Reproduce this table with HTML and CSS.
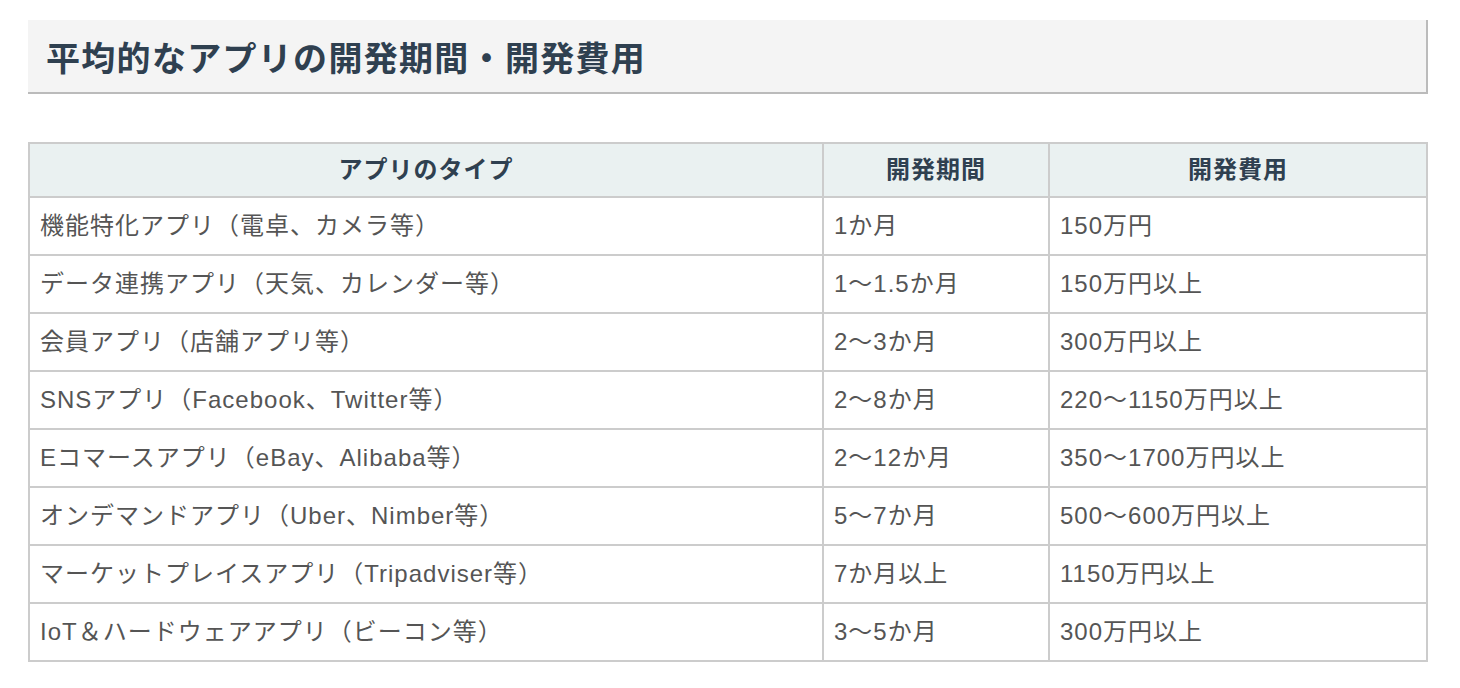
FILE: index.html
```html
<!DOCTYPE html>
<html lang="ja">
<head>
<meta charset="utf-8">
<link rel="stylesheet" href="styles.css">
</head>
<body>
<div class="page">
  <h2 class="heading">平均的なアプリの開発期間・開発費用</h2>
  <table class="cost-table">
    <colgroup>
      <col class="c-type">
      <col class="c-period">
      <col class="c-cost">
    </colgroup>
    <thead>
      <tr><th>アプリのタイプ</th><th>開発期間</th><th>開発費用</th></tr>
    </thead>
    <tbody>
      <tr><td>機能特化アプリ（電卓、カメラ等）</td><td>1か月</td><td>150万円</td></tr>
      <tr><td>データ連携アプリ（天気、カレンダー等）</td><td>1〜1.5か月</td><td>150万円以上</td></tr>
      <tr><td>会員アプリ（店舗アプリ等）</td><td>2〜3か月</td><td>300万円以上</td></tr>
      <tr><td>SNSアプリ（Facebook、Twitter等）</td><td>2〜8か月</td><td>220〜1150万円以上</td></tr>
      <tr><td>Eコマースアプリ（eBay、Alibaba等）</td><td>2〜12か月</td><td>350〜1700万円以上</td></tr>
      <tr><td>オンデマンドアプリ（Uber、Nimber等）</td><td>5〜7か月</td><td>500〜600万円以上</td></tr>
      <tr><td>マーケットプレイスアプリ（Tripadviser等）</td><td>7か月以上</td><td>1150万円以上</td></tr>
      <tr><td>IoT＆ハードウェアアプリ（ビーコン等）</td><td>3〜5か月</td><td>300万円以上</td></tr>
    </tbody>
  </table>
</div>
</body>
</html>
```
FILE: styles.css
```css
html, body {
  margin: 0;
  padding: 0;
  background: #ffffff;
}
body {
  font-family: "Liberation Sans", "Noto Sans CJK JP", sans-serif;
}
.page {
  padding: 20px 0 0 28px;
  width: 1400px;
}
.heading {
  margin: 0;
  background: #f4f4f4;
  border-right: 2px solid #bbbbbb;
  border-bottom: 2px solid #bbbbbb;
  height: 72px;
  padding: 0 0 0 18px;
  display: flex;
  align-items: center;
  font-size: 34px;
  font-weight: 700;
  letter-spacing: 1.3px;
  color: #2f4050;
}
.cost-table {
  margin-top: 48px;
  width: 1398px;
  border-collapse: collapse;
  table-layout: fixed;
  font-size: 24px;
  letter-spacing: 1px;
}
.c-type { width: 794px; }
.c-period { width: 226px; }
.c-cost { width: 378px; }
.cost-table th,
.cost-table td {
  border: 2px solid #cccccc;
}
.cost-table th {
  background: #eaf1f1;
  color: #2f4050;
  font-weight: 700;
  text-align: center;
  padding: 8px 10px;
  line-height: 36px;
}
.cost-table td {
  color: #555555;
  text-align: left;
  padding: 10px 10px;
  line-height: 36px;
}
```
